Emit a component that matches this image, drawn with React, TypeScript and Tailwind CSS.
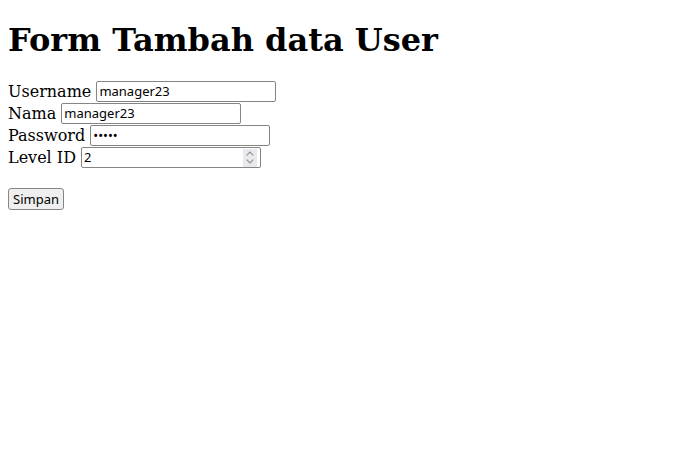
export default function App() {
  const field =
    "h-[21px] w-[180px] rounded-[2px] border border-[#858585] bg-white px-[2px] py-px align-baseline text-[13px] leading-[normal] font-['Noto_Sans',sans-serif] text-black";
  return (
    <div className="min-h-[451px] bg-white p-2 font-['DejaVu_Serif',serif] text-[16px] leading-[normal] text-black">
      <h1 className="mt-[13.44px] mb-[21.44px] text-[32px] font-bold leading-[normal]">Form Tambah data User</h1>
      <form>
        <div className="h-[22px]">
          Username <input type="text" defaultValue="manager23" className={field} />
        </div>
        <div className="h-[22px]">
          Nama <input type="text" defaultValue="manager23" className={field} />
        </div>
        <div className="h-[22px]">
          Password <input type="password" defaultValue="12345" className={field} />
        </div>
        <div className="h-[22px]">
          Level ID{" "}
          <span className="relative inline-block">
            <input
              type="number"
              defaultValue="2"
              className={`${field} [appearance:textfield] [&::-webkit-inner-spin-button]:appearance-none`}
            />
            {/* spinner, always visible in the screenshot */}
            <span className="absolute top-[2px] right-[4px] flex h-[18px] w-[14px] flex-col items-center justify-center gap-[3px] bg-[#e9e9ed]">
              <svg width="8" height="5" viewBox="0 0 8 5" fill="none">
                <path d="M0.7 4.3 L4 1 L7.3 4.3" stroke="#8d8d95" strokeWidth="1.1" />
              </svg>
              <svg width="8" height="5" viewBox="0 0 8 5" fill="none">
                <path d="M0.7 0.7 L4 4 L7.3 0.7" stroke="#8d8d95" strokeWidth="1.1" />
              </svg>
            </span>
          </span>
        </div>
        <div>&nbsp;</div>
        <div>
          <button
            type="submit"
            className="rounded-[3px] border border-[#858585] bg-[#efefef] px-[4px] py-px text-[13px] leading-[normal] font-['Noto_Sans',sans-serif] text-black"
          >
            Simpan
          </button>
        </div>
      </form>
    </div>
  );
}
